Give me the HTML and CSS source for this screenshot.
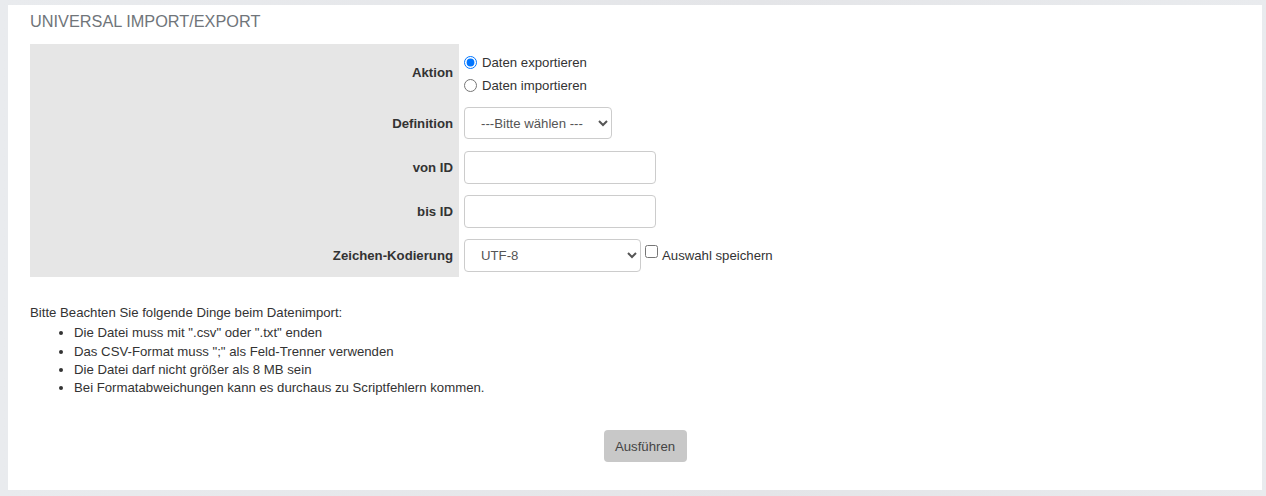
FILE: index.html
```html
<!DOCTYPE html>
<html lang="de">
<head>
<meta charset="utf-8">
<title>Universal Import/Export</title>
<link rel="stylesheet" href="styles.css">
</head>
<body>
<div class="panel">
  <h1 class="title">UNIVERSAL IMPORT/EXPORT</h1>
  <table class="form-table">
    <tr class="row-aktion">
      <th class="label">Aktion</th>
      <td class="value">
        <label class="radio-line"><input type="radio" name="aktion" checked><span>Daten exportieren</span></label>
        <label class="radio-line"><input type="radio" name="aktion"><span>Daten importieren</span></label>
      </td>
    </tr>
    <tr>
      <th class="label">Definition</th>
      <td class="value">
        <select class="ctl sel-def"><option>---Bitte wählen ---</option></select>
      </td>
    </tr>
    <tr>
      <th class="label">von ID</th>
      <td class="value"><input type="text" class="ctl txt"></td>
    </tr>
    <tr>
      <th class="label">bis ID</th>
      <td class="value"><input type="text" class="ctl txt"></td>
    </tr>
    <tr>
      <th class="label">Zeichen-Kodierung</th>
      <td class="value">
        <div class="enc-line">
          <select class="ctl sel-enc"><option>UTF-8</option></select>
          <label class="check-line"><input type="checkbox"><span>Auswahl speichern</span></label>
        </div>
      </td>
    </tr>
  </table>

  <div class="notes">
    <p class="notes-head">Bitte Beachten Sie folgende Dinge beim Datenimport:</p>
    <ul class="notes-list">
      <li>Die Datei muss mit ".csv" oder ".txt" enden</li>
      <li>Das CSV-Format muss ";" als Feld-Trenner verwenden</li>
      <li>Die Datei darf nicht größer als 8 MB sein</li>
      <li>Bei Formatabweichungen kann es durchaus zu Scriptfehlern kommen.</li>
    </ul>
  </div>

  <div class="actions">
    <button class="btn" type="button">Ausführen</button>
  </div>
</div>
</body>
</html>
```
FILE: styles.css
```css
html, body {
  margin: 0;
  padding: 0;
}
body {
  background: linear-gradient(90deg, #e9ebee 0%, #e4e5e8 60%, #e9ebee 100%);
  font-family: "Liberation Sans", Arial, sans-serif;
  font-size: 13.2px;
  color: #333;
  padding: 5px 4px 6px 8px;
}
.panel {
  background: #fff;
  padding: 6px 22px 28px 22px;
  min-height: 451px;
}
.title {
  margin: 0;
  font-size: 16.3px;
  font-weight: normal;
  line-height: 20px;
  color: #70757a;
}
.form-table {
  margin-top: 13px;
  border-collapse: collapse;
  border-spacing: 0;
}
.form-table tr {
  height: 44px;
}
.form-table tr.row-aktion {
  height: 57px;
}
.label {
  background: #e6e6e6;
  width: 423px;
  padding: 0 6px 0 0;
  text-align: right;
  font-weight: bold;
  color: #333;
  font-size: 13.2px;
  vertical-align: middle;
}
.value {
  padding: 0 0 0 5px;
  vertical-align: middle;
}
.row-aktion .value {
  padding-top: 7px;
  padding-bottom: 4px;
}
.radio-line {
  display: flex;
  align-items: center;
  height: 23px;
  color: #333;
}
.radio-line input {
  margin: 0 5px 0 0;
  width: 13px;
  height: 13px;
}
.ctl {
  box-sizing: border-box;
  border: 1px solid #ccc;
  border-radius: 4px;
  background: #fff;
  font-family: "Liberation Sans", Arial, sans-serif;
  font-size: 13.2px;
  color: #555;
  display: block;
}
.sel-def {
  width: 148px;
  height: 32px;
  padding: 0 8px 0 12px;
}
.txt {
  width: 192px;
  height: 33px;
  padding: 0 12px;
}
.enc-line {
  display: flex;
  align-items: center;
}
.sel-enc {
  width: 177px;
  height: 33px;
  padding: 0 8px 0 12px;
}
.check-line {
  display: flex;
  align-items: center;
  color: #333;
}
.check-line input {
  margin: 0 4px 7px 4px;
  width: 13px;
  height: 13px;
}
.notes {
  margin-top: 27px;
  line-height: 18.3px;
  color: #333;
}
.notes-head {
  margin: 0;
}
.notes-list {
  margin: 2px 0 0 0;
  padding-left: 44px;
}
.actions {
  margin-top: 33px;
  display: flex;
  justify-content: center;
  padding-left: 20px;
}
.btn {
  width: 83px;
  height: 32px;
  background: #c8c8c8;
  border: none;
  border-radius: 4px;
  font-family: "Liberation Sans", Arial, sans-serif;
  font-size: 13.2px;
  color: #444;
}
```
